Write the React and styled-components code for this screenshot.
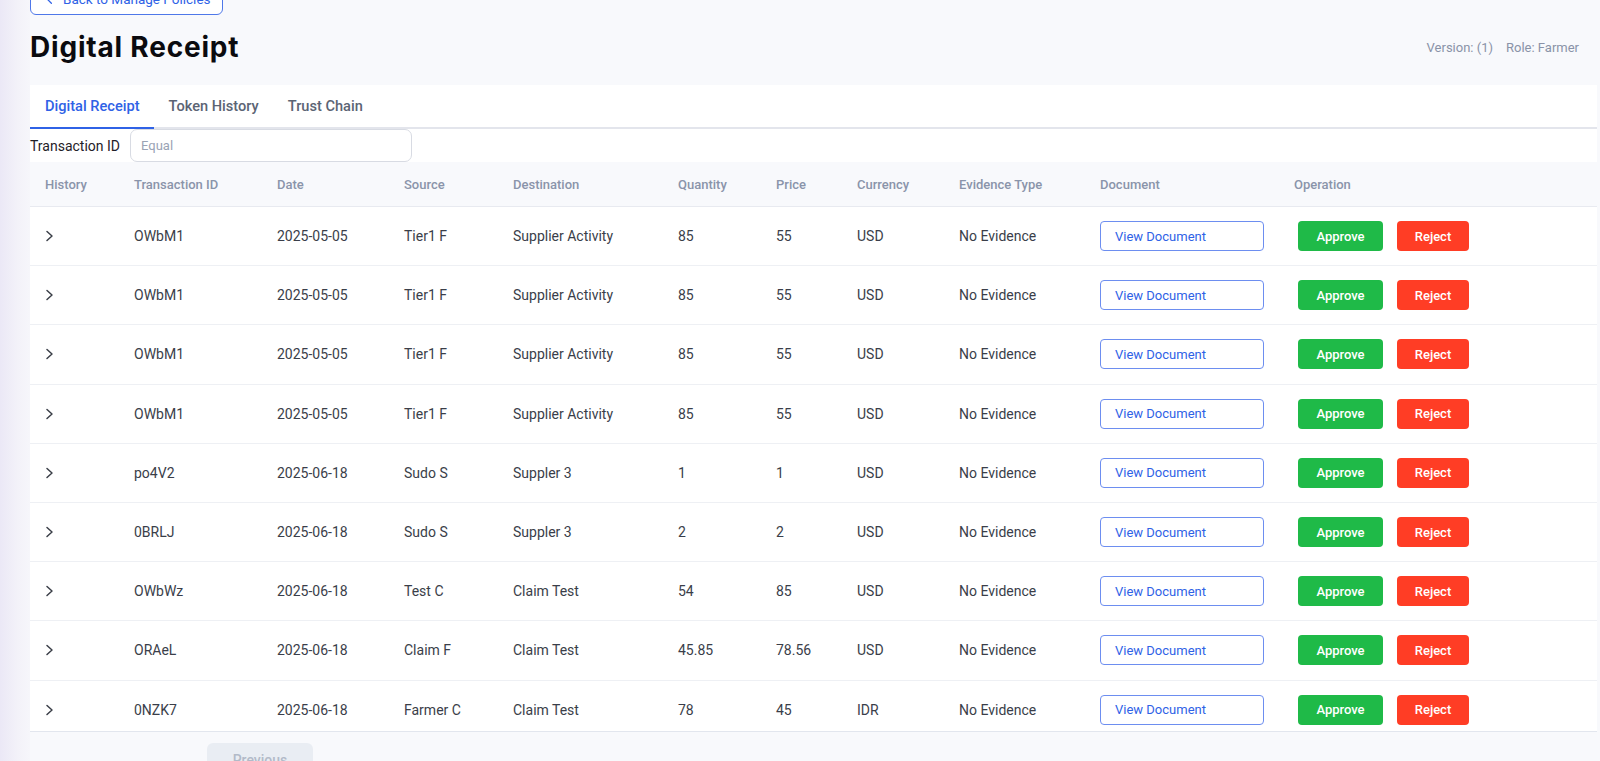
import React from "react";
import styled, { createGlobalStyle } from "styled-components";
import { ChevronLeft } from "lucide-react";

const GlobalStyle = createGlobalStyle`
  html, body {
    margin: 0;
    padding: 0;
    background: #f8f9fc;
    font-family: Roboto, "Liberation Sans", Arial, sans-serif;
    overflow: hidden;
  }
  * { box-sizing: border-box; }
`;

const rows = [
  { id: "OWbM1", date: "2025-05-05", source: "Tier1 F", dest: "Supplier Activity", qty: "85", price: "55", cur: "USD" },
  { id: "OWbM1", date: "2025-05-05", source: "Tier1 F", dest: "Supplier Activity", qty: "85", price: "55", cur: "USD" },
  { id: "OWbM1", date: "2025-05-05", source: "Tier1 F", dest: "Supplier Activity", qty: "85", price: "55", cur: "USD" },
  { id: "OWbM1", date: "2025-05-05", source: "Tier1 F", dest: "Supplier Activity", qty: "85", price: "55", cur: "USD" },
  { id: "po4V2", date: "2025-06-18", source: "Sudo S", dest: "Suppler 3", qty: "1", price: "1", cur: "USD" },
  { id: "0BRLJ", date: "2025-06-18", source: "Sudo S", dest: "Suppler 3", qty: "2", price: "2", cur: "USD" },
  { id: "OWbWz", date: "2025-06-18", source: "Test C", dest: "Claim Test", qty: "54", price: "85", cur: "USD" },
  { id: "ORAeL", date: "2025-06-18", source: "Claim F", dest: "Claim Test", qty: "45.85", price: "78.56", cur: "USD" },
  { id: "0NZK7", date: "2025-06-18", source: "Farmer C", dest: "Claim Test", qty: "78", price: "45", cur: "IDR" },
];

const headers = [
  "History",
  "Transaction ID",
  "Date",
  "Source",
  "Destination",
  "Quantity",
  "Price",
  "Currency",
  "Evidence Type",
  "Document",
  "Operation",
];

// small ">" used to expand a row's history
const Expand = () => (
  <svg width="9" height="12" viewBox="0 0 9 12" fill="none">
    <polyline
      points="2,1.5 7,6 2,10.5"
      stroke="#3b3f48"
      strokeWidth="1.5"
      strokeLinecap="round"
      strokeLinejoin="round"
    />
  </svg>
);

const App = () => {
  return (
    <>
      <GlobalStyle />
      <Page>
        <SideEdge />
        <Main>
          <BackButton>
            <ChevronLeft size={15} strokeWidth={2} />
            Back to Manage Policies
          </BackButton>
          <TitleRow>
            <Title>Digital Receipt</Title>
            <Meta>
              <span>Version: (1)</span>
              <span>Role: Farmer</span>
            </Meta>
          </TitleRow>

          <Panel>
            <Tabs>
              <Tab active>Digital Receipt</Tab>
              <Tab>Token History</Tab>
              <Tab>Trust Chain</Tab>
            </Tabs>

            <FilterRow>
              <FilterLabel>Transaction ID</FilterLabel>
              <FilterInput placeholder="Equal" />
            </FilterRow>

            <TableWrap>
              <HeadRow>
                {headers.map((h) => (
                  <HeadCell key={h}>{h}</HeadCell>
                ))}
              </HeadRow>
              {rows.map((r, i) => (
                <Row key={i}>
                  <Cell>
                    <Expand />
                  </Cell>
                  <Cell>{r.id}</Cell>
                  <Cell>{r.date}</Cell>
                  <Cell>{r.source}</Cell>
                  <Cell>{r.dest}</Cell>
                  <Cell>{r.qty}</Cell>
                  <Cell>{r.price}</Cell>
                  <Cell>{r.cur}</Cell>
                  <Cell>No Evidence</Cell>
                  <Cell>
                    <DocButton>View Document</DocButton>
                  </Cell>
                  <Cell>
                    <Actions>
                      <ActionButton tone="approve" width={85}>
                        Approve
                      </ActionButton>
                      <ActionButton tone="reject" width={72}>
                        Reject
                      </ActionButton>
                    </Actions>
                  </Cell>
                </Row>
              ))}
            </TableWrap>
          </Panel>

          <Pager>
            <PagerButton disabled>Previous</PagerButton>
          </Pager>
        </Main>
      </Page>
    </>
  );
};
export default App;

const Page = styled.div`
  display: flex;
  width: 1600px;
  height: 761px;
  overflow: hidden;
`;

const SideEdge = styled.div`
  width: 30px;
  flex-shrink: 0;
  background: linear-gradient(90deg, #ebe8f6 0%, #f3f2f9 60%, #f6f6fb 100%);
`;

const Main = styled.div`
  flex: 1;
  margin-right: 3px;
  display: flex;
  flex-direction: column;
  & > * {
    flex-shrink: 0;
  }
`;

const BackButton = styled.button`
  margin-top: -17px;
  align-self: flex-start;
  height: 32px;
  width: 193px;
  display: flex;
  align-items: center;
  gap: 6px;
  padding: 0 0 0 11px;
  border: 1px solid #4f78e9;
  border-radius: 6px;
  background: #ffffff;
  color: #2f62e6;
  font-family: Roboto, sans-serif;
  font-size: 13.5px;
  white-space: nowrap;
`;

const TitleRow = styled.div`
  display: flex;
  align-items: center;
  justify-content: space-between;
  margin-top: 14px;
  padding-right: 18px;
`;

const Title = styled.h1`
  margin: 0;
  font-family: Inter, "Noto Sans", sans-serif;
  font-weight: 700;
  font-size: 28px;
  line-height: 36px;
  color: #0b0b0f;
  letter-spacing: 0.8px;
`;

const Meta = styled.div`
  display: flex;
  gap: 13px;
  font-size: 13px;
  color: #8a93a8;
`;

const Panel = styled.div`
  margin-top: 20px;
  background: #ffffff;
  display: flex;
  flex-direction: column;
`;

const Tabs = styled.div`
  display: flex;
  height: 44px;
  border-bottom: 2px solid #e3e5ec;
`;

const Tab = styled.div`
  display: flex;
  align-items: center;
  padding: 0 14px 0 15px;
  margin-bottom: -2px;
  font-size: 14.6px;
  font-weight: 500;
  color: ${(p) => (p.active ? "#2f62e6" : "#5b6474")};
  border-bottom: 2px solid ${(p) => (p.active ? "#2f62e6" : "transparent")};
`;

const FilterRow = styled.div`
  display: flex;
  align-items: center;
  gap: 10px;
  height: 33px;
`;

const FilterLabel = styled.span`
  font-size: 14px;
  color: #1f2128;
`;

const FilterInput = styled.input`
  width: 282px;
  height: 33px;
  border: 1px solid #d8dbe3;
  border-radius: 7px;
  padding: 0 10px;
  font-family: Roboto, sans-serif;
  font-size: 13px;
  color: #333;
  &::placeholder {
    color: #9aa3b5;
  }
`;

const cols = "89px 143px 127px 109px 165px 98px 81px 102px 141px 194px 1fr";

const TableWrap = styled.div`
  height: 570px;
  overflow: hidden;
  border-bottom: 1px solid #e2e6ee;
`;

const HeadRow = styled.div`
  display: grid;
  grid-template-columns: ${cols};
  height: 45px;
  align-items: center;
  background: #f8f9fc;
  border-bottom: 1px solid #e8eaf0;
`;

const HeadCell = styled.div`
  padding: 0 15px;
  font-size: 13px;
  font-weight: 500;
  color: #8a94aa;
  white-space: nowrap;
`;

const Row = styled.div`
  display: grid;
  grid-template-columns: ${cols};
  height: 59.2px;
  align-items: center;
  border-bottom: 1px solid #eef0f4;
`;

const Cell = styled.div`
  padding: 0 15px;
  font-size: 14px;
  color: #3a3e49;
  white-space: nowrap;
  display: flex;
  align-items: center;
`;

const DocButton = styled.button`
  width: 165px;
  height: 30px;
  border: 1px solid #6d8ef0;
  border-radius: 4px;
  background: #ffffff;
  color: #2f62e6;
  font-family: Roboto, sans-serif;
  font-size: 13px;
  padding: 0 0 0 14px;
  text-align: left;
`;

const Actions = styled.div`
  display: flex;
  gap: 14px;
  margin-left: 4px;
`;

const ActionButton = styled.button`
  width: ${(p) => p.width}px;
  height: 30px;
  border: none;
  border-radius: 4px;
  background: ${(p) => (p.tone === "approve" ? "#1fba48" : "#ff3d25")};
  color: #ffffff;
  font-family: Roboto, sans-serif;
  font-size: 13px;
  font-weight: 500;
`;

const Pager = styled.div`
  display: flex;
  padding: 11px 0 0 177px;
`;

const PagerButton = styled.button`
  width: 106px;
  height: 34px;
  border: none;
  border-radius: 6px;
  background: #e9edf3;
  color: #b2bac8;
  font-family: Roboto, sans-serif;
  font-size: 14px;
  font-weight: 500;
`;
